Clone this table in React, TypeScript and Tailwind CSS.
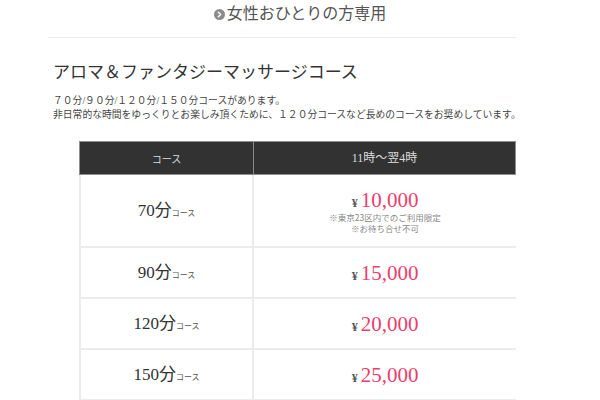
import { ChevronRight } from 'lucide-react';

const rows = [
  { min: "70", price: "10,000", notes: ["※東京23区内でのご利用限定", "※お待ち合せ不可"] },
  { min: "90", price: "15,000", notes: [] },
  { min: "120", price: "20,000", notes: [] },
  { min: "150", price: "25,000", notes: [] },
];

const serif = "font-['Liberation_Serif','Noto_Sans_CJK_JP',serif]";

export default function App() {
  return (
    <div className={`w-[600px] h-[400px] overflow-hidden bg-white text-[#333] ${serif}`}>
      {/* top heading */}
      <div className="h-[37px] flex justify-center pt-[5px]">
        <div className="flex items-center gap-[2px] h-[18px]">
          <span className="w-[11px] h-[11px] rounded-full bg-[#8c8c8c] flex items-center justify-center">
            <ChevronRight className="w-[9px] h-[9px] text-white" strokeWidth={4} />
          </span>
          <span className="text-[16px] leading-[18px] text-[#555]">女性おひとりの方専用</span>
        </div>
      </div>
      <div className="ml-[48px] w-[468px] border-t border-[#ececec]" />

      <div className="pl-[53px] pt-[25px]">
        <h2 className="text-[17px] leading-[20px] font-normal text-[#333]">アロマ＆ファンタジーマッサージコース</h2>
        <p className="mt-[11px] text-[9.8px] leading-[13.5px] text-[#444] whitespace-nowrap">
          ７０分/９０分/１２０分/１５０分コースがあります。
          <br />
          非日常的な時間をゆっくりとお楽しみ頂くために、１２０分コースなど長めのコースをお奨めしています。
        </p>
      </div>

      {/* price table */}
      <div className="ml-[79px] w-[437px] mt-[20px]">
        <div className="flex h-[34px] bg-[#323232] border border-[#8f8f8f] text-[#ddd]">
          <div className="w-[174px] flex items-center justify-center text-[10px] border-r border-[#8a8a8a] font-['Noto_Sans_CJK_JP',sans-serif]">
            コース
          </div>
          <div className="flex-1 flex items-center justify-center text-[12px]">11時〜翌4時</div>
        </div>
        <div className="border-l-2 border-[#ececec]">
          {rows.map((r, i) => (
            <div
              key={r.min}
              className={`flex border-b-2 border-[#ececec] ${i === 0 ? 'h-[73px]' : 'h-[51px]'}`}
            >
              <div className="w-[173px] border-r-2 border-[#ececec] flex items-center justify-center">
                <span className="text-[17px] leading-none text-[#333]">{r.min}分</span>
                <span className="text-[8px] mt-[4px] text-[#555] font-['Noto_Sans_CJK_JP',sans-serif]">コース</span>
              </div>
              <div className="flex-1 flex flex-col items-center justify-center">
                <div className="flex items-baseline h-[24px]">
                  <span className="text-[12px] font-bold text-[#555] mr-[3px]">¥</span>
                  <span className="text-[21px] leading-[24px] text-[#ee3d6c]">{r.price}</span>
                </div>
                {r.notes.map((n) => (
                  <div
                    key={n}
                    className="text-[8.5px] leading-[11px] text-[#888] font-['Noto_Sans_CJK_JP',sans-serif]"
                  >
                    {n}
                  </div>
                ))}
              </div>
            </div>
          ))}
        </div>
      </div>
    </div>
  );
}
